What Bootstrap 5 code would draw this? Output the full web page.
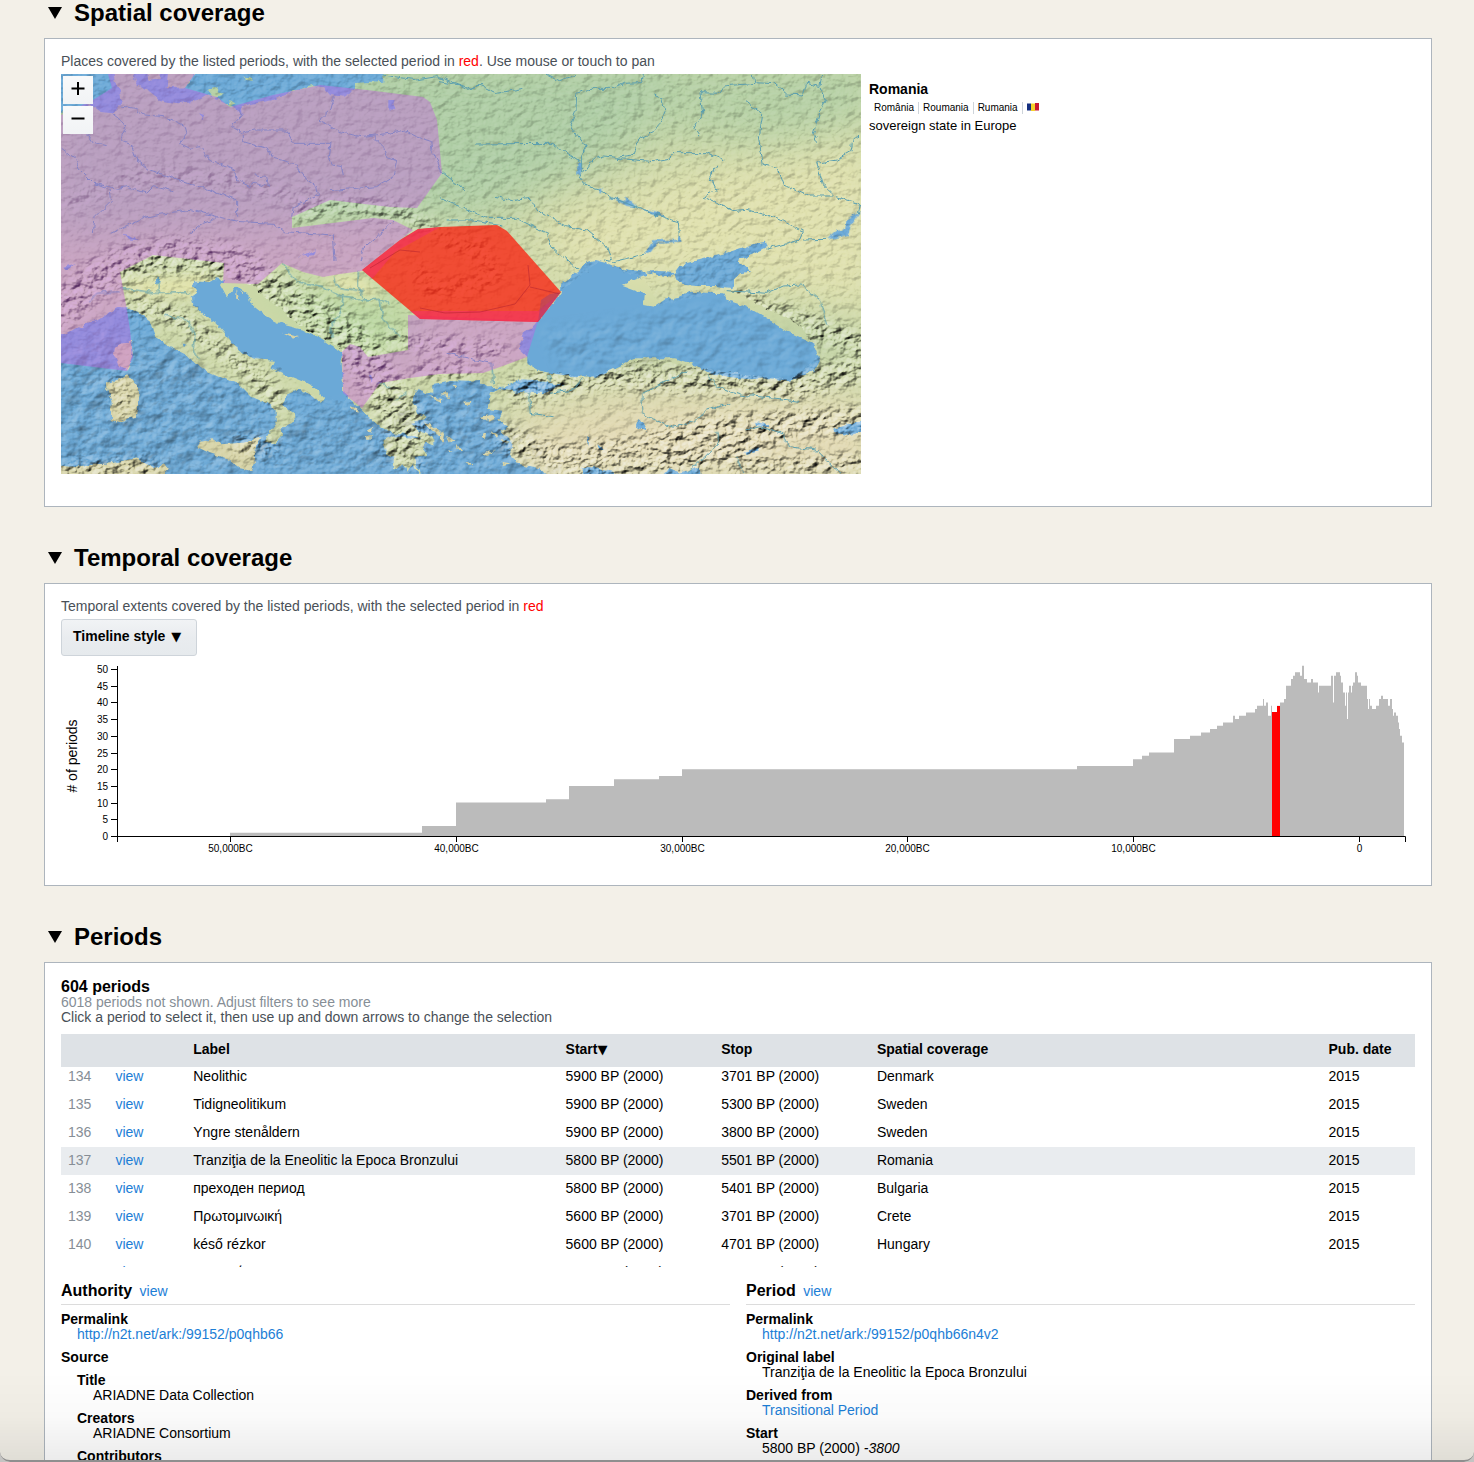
<!DOCTYPE html>
<html lang="en">
<head>
<meta charset="utf-8">
<meta name="viewport" content="width=device-width, initial-scale=1">
<title>Periods</title>
<link rel="stylesheet" href="https://cdn.jsdelivr.net/npm/bootstrap@5.3.0/dist/css/bootstrap.min.css">
<style>
  body { background: #f3f0e8; color: #000; font: 14px/15px "Liberation Sans", Arial, sans-serif; }
  a { color: #1c7ed6; text-decoration: none; }
  main { padding: 0 42px 0 44px; }
  .section-title { font-size: 24px; line-height: 26px; font-weight: 700; margin: 38px 0 12px; }
  section:first-child .section-title { margin-top: 0; }
  .section-toggle { all: unset; display: flex; align-items: center; gap: 12px; padding-left: 4px; cursor: pointer; }
  .panel { background: #fff; border: 1px solid #adb5bd; padding: 15px 16px 16px; }
  .hint { color: #495057; margin-bottom: 5px; }
  .selected-word { color: #f00; }
  .map-frame { width: 800px; max-width: 100%; }
  .map-frame svg { display: block; width: 100%; height: auto; }
  .map-zoom { position: absolute; top: 2px; left: 2px; gap: 2px; }
  .map-zoom button { width: 30px; height: 28px; border: 0; padding: 0; background: linear-gradient(#f8f9fa, #f1f3f5); }
  .map-zoom svg { width: 14px; margin: 0 auto; }
  .place-info { padding-top: 7px; }
  .place-name { font-size: 14px; font-weight: 700; line-height: 16px; }
  .alt-names { font-size: 10px; line-height: 12px; margin: 5px 0 4px; padding-left: 1px; }
  .alt-names li { padding: 0 4px; border-right: 1px solid #ced4da; }
  .alt-names li:last-child { border: 0; }
  .alt-names svg { display: block; }
  .place-note { font-size: 13px; }
  .style-button { height: 37px; padding: 0 15px 2px 11px; border: 1px solid #ced4da; border-radius: 3px; background: linear-gradient(#f1f3f5, #e9ecef 50%, #e6eaed); font-size: 14px; font-weight: 700; line-height: 15px; color: #000; }
  .glyph { font-family: "DejaVu Sans", sans-serif; font-size: 13px; line-height: 13px; }
  .style-button .glyph { margin-left: 2px; }
  .timeline { display: block; width: 100%; height: auto; }
  .timeline text { font-size: 10px; }
  .timeline .axis-title { font-size: 14px; }
  .period-count { font-size: 16px; line-height: 17px; font-weight: 700; }
  .not-shown { color: #868e96; }
  .period-scroll { height: 233px; overflow: hidden; margin-top: 9px; }
  .period-list { width: 100%; table-layout: fixed; border-collapse: collapse; }
  .period-list th { background: #dee2e6; height: 33px; padding: 0 7px 3px; white-space: nowrap; }
  .period-list td { padding: 6px 7px 7px; white-space: nowrap; }
  .period-list tbody tr:first-child td { padding-top: 2px; }
  .period-list tr.chosen { background: #e9ecef; }
  .period-list td:first-child { color: #868e96; }
  .detail-title { font-size: 16px; line-height: 20px; font-weight: 700; padding-bottom: 3px; border-bottom: 1px solid #dcdcdc; margin: 14px 0 7px; }
  .detail-title a { font-size: 14px; font-weight: 400; margin-left: 3px; }
  .facts { margin: 0; }
  .facts dt { font-weight: 700; line-height: 15px; }
  .facts dd { margin: 0 0 8px 16px; }
  .facts dd.nested { padding-top: 8px; }
  .window-edge { position: fixed; left: 0; right: 0; bottom: 0; height: 90px; pointer-events: none; border-bottom: 2px solid #8f8f8f; border-radius: 0 0 10px 10px; box-shadow: 0 0 0 12px #c4c4c2; clip-path: inset(0); background: linear-gradient(transparent, rgba(0,0,0,.02) 50%, rgba(0,0,0,.075)); }
</style>
<script src="https://cdn.jsdelivr.net/npm/bootstrap@5.3.0/dist/js/bootstrap.bundle.min.js"></script>
</head>
<body class="vh-100 overflow-hidden">
<main>
  <section>
    <h2 class="section-title"><button class="section-toggle" type="button"><svg width="14" height="12" viewBox="0 0 14 12" aria-hidden="true"><path d="M0 0H14L7 12Z"/></svg>Spatial coverage</button></h2>
    <div class="panel pb-0">
      <p class="hint">Places covered by the listed periods, with the selected period in <span class="selected-word">red</span>. Use mouse or touch to pan</p>
      <div class="d-flex gap-2 mb-4 pb-2">
        <div class="map-frame position-relative flex-shrink-0">
          <svg viewBox="61 74 800 400" role="img" aria-label="Map of Europe and the Black Sea">
            <defs>
              <filter id="soft" x="-30%" y="-30%" width="160%" height="160%"><feGaussianBlur stdDeviation="22"/></filter>
              <filter id="fade" x="-30%" y="-30%" width="160%" height="160%"><feGaussianBlur stdDeviation="6"/></filter>
              <filter id="rugged" x="-5%" y="-5%" width="110%" height="110%" color-interpolation-filters="sRGB"><feTurbulence type="fractalNoise" baseFrequency=".14" numOctaves="2" seed="4"/><feDisplacementMap in="SourceGraphic" scale="6" xChannelSelector="R" yChannelSelector="G"/></filter>
              <filter id="relief" x="0" y="0" width="100%" height="100%" color-interpolation-filters="sRGB"><feTurbulence type="fractalNoise" baseFrequency=".1 .13" numOctaves="4" seed="11"/><feColorMatrix values="0 0 0 0 0 0 0 0 0 0 0 0 0 0 0 1 0 0 0 0"/><feDiffuseLighting surfaceScale="3.500" diffuseConstant=".76" lighting-color="#fff"><feDistantLight azimuth="225" elevation="45"/></feDiffuseLighting></filter>
              <filter id="swell" x="0" y="0" width="100%" height="100%" color-interpolation-filters="sRGB"><feTurbulence type="fractalNoise" baseFrequency=".05 .06" numOctaves="3" seed="7"/><feColorMatrix values="0 0 0 0 0 0 0 0 0 0 0 0 0 0 0 1 0 0 0 0"/><feDiffuseLighting surfaceScale="2.500" diffuseConstant=".71" lighting-color="#fff"><feDistantLight azimuth="225" elevation="45"/></feDiffuseLighting></filter>
              <mask id="ranges" maskUnits="userSpaceOnUse" x="61" y="74" width="800" height="400">
                <rect x="61" y="74" width="800" height="400" fill="#333"/>
                <g filter="url(#fade)" fill="none" stroke="#fff" stroke-linecap="round" stroke-linejoin="round">
                  <path d="M61 310L95 280L130 262L180 255L225 262L250 270" stroke-width="34"/>
                  <path d="M65 205L110 185L160 175L230 180L280 195L310 195" stroke-width="12" opacity=".4"/>
                  <path d="M300 212L335 205L400 212L440 235L480 255" stroke-width="14" opacity=".8"/>
                  <path d="M475 240L495 275L470 287L430 290L420 270" stroke-width="16" opacity=".8"/>
                  <path d="M130 302L180 318L215 345L255 375L275 400" stroke-width="18"/>
                  <path d="M255 285L300 310L350 340L375 375L410 430" stroke-width="40"/>
                  <path d="M390 340L430 345L500 350M420 370L470 370" stroke-width="14"/>
                  <path d="M520 390L600 375L700 380L800 385L855 370M510 440L560 460L640 450L700 430L860 420M560 470L690 460L780 430" stroke-width="26"/>
                  <path d="M740 300L790 320L861 345" stroke-width="22"/>
                  <path d="M240 445L270 448M120 385L125 410M70 470L150 468M390 450L415 460M730 465H860" stroke-width="18"/>
                </g>
                <!-- the sea floor keeps its own, flatter shading -->
                <path d="M528 345L535 318L560 290L600 262L645 280L660 305L730 290L800 325L820 355L790 380L700 368L650 357L590 377L530 370ZM228 278L250 285L300 325L342 350L345 400L320 400L270 362L240 350L195 305L195 285Z" fill="#000" filter="url(#rugged)"/>
              </mask>
              <mask id="deep" maskUnits="userSpaceOnUse" x="61" y="74" width="800" height="400"><g filter="url(#fade)" fill="#bbb"><path d="M100 330L200 360L270 420L330 410L480 380L560 474H61V360Z"/><path d="M540 330L640 315L740 300L820 350L800 380L700 370L560 370Z" fill="#666"/></g></mask>
              <clipPath id="red-area"><path d="M362 270L400 240L418 229L440 227L497 225L507 231L561 292L538 322L420 319Z"/></clipPath>
            </defs>
            <rect x="61" y="74" width="800" height="400" fill="#cdd8a8"/>
            <g filter="url(#soft)">
              <path d="M40 50H680L640 150L480 220L300 230L40 240Z" fill="#aecda4"/>
              <path d="M680 50H880V140L760 150L640 130Z" fill="#b5d0a4"/>
              <path d="M540 220L700 170L880 130V310L720 290L560 280Z" fill="#e0e1ae"/>
              <path d="M500 420L620 390L760 390L880 400V490H520Z" fill="#e2d9b2"/>
              <path d="M250 270L330 290L420 300L410 350L340 350Z" fill="#b6d69f"/>
              <path d="M740 290L861 340V360L800 350Z" fill="#b5cda0"/>
              <path d="M590 340H760V365H590Z" fill="#bccf9e"/>
            </g>
            <g filter="url(#fade)" fill="#e2e3aa"><path d="M120 282L210 275L200 296L140 295Z"/><path d="M320 278L360 275L385 300L340 290Z"/></g>
            <!-- seas -->
            <g filter="url(#rugged)" fill="#6ba9d7">
              <g transform="translate(40 0) scale(.333333)">
                <path d="M20 180H215L225 250L240 270L245 310L215 340L180 335L150 315L130 320L20 350Z"/>
                <path d="M275 180H1030V245L975 250L945 252V270L910 290L870 285L850 262L820 257L760 272L700 300L605 318L608 345L580 320L540 300L500 285L475 300L420 310L380 305L360 300L330 275L290 255Z"/>
                <g fill="#b4cfa2"><path d="M320 200H362V238L325 242Z"/><path d="M385 200H475L440 262L380 265Z"/><path d="M505 270L530 262L545 285L520 292ZM612 230L635 232L638 243L615 240ZM565 300L590 310L570 318Z"/></g>
                <path d="M245 705L270 708L293 722L275 722ZM775 770L805 762L830 750L825 765ZM1045 300L1065 300L1060 315L1070 328L1045 325ZM478 340L492 345L488 358Z"/>
              </g>
              <g transform="translate(40 250) scale(.333333)">
                <path d="M40 262L100 240L150 215L190 200L230 172L260 172L290 182L330 215L345 260L390 290L440 315L480 355L550 385L600 405L635 440L680 460L710 480V520L690 545L675 575L705 580L725 555L730 530L765 515L762 490L740 475L725 465L745 430L775 418L815 435L845 462L852 440L825 415L790 395L740 375L695 355L705 332L650 328L615 315L580 285L555 250L530 220L490 195L460 165L455 140L470 130L455 110L460 95L500 95L530 85L550 90L540 105L560 142L580 115L600 112L625 130L630 160L680 200L730 225L790 240L850 270L905 310V340L910 430L955 470L985 500L1020 530L1060 550L1110 556L1150 570L1100 565L1060 558L1030 572L1040 610L1060 620L1062 650L1075 655L1090 640L1105 665L1120 640L1140 675L1142 668L1120 620L1165 615L1145 590L1160 578L1205 598L1190 570L1140 540L1110 520L1160 505L1135 490L1115 440L1135 415L1160 430L1190 432L1180 410L1200 400L1320 390V700H40Z"/>
                <path d="M345 90L360 80L358 100L348 102ZM985 375L998 380L995 395ZM430 280L440 285L435 292ZM70 50L110 40L80 60Z"/>
              </g>
              <g transform="translate(440 250) scale(.333333)">
                <path d="M362 128L365 95L390 85L415 65L435 38L465 30L500 40L530 55L615 65L620 75L580 90L548 105L615 130L612 165L640 170L670 150L720 140L750 125L800 128L850 130L860 150L920 170L980 205L1045 245L1120 280L1140 330L1120 365L1050 393L985 385L930 388L860 380L800 365L770 345L705 325L590 325L545 345L470 380L380 378L300 362L262 340V320L235 295L252 250L280 232L295 212Z"/>
                <path d="M700 72L720 45L800 25L870 5L930-15L975-25L980-8L935 15L890 30L930 65L900 70L880 90L878 115L830 108L770 108L735 105L705 90ZM615 65L650 62L700 66L695 80L650 74Z"/>
                <path d="M180 418L220 400L240 388L320 392L330 400L375 405L330 420L320 430L270 428L230 425Z"/>
                <path d="M-20 402L30 390L100 393L130 400L145 412L190 410L150 430L142 480L190 485L175 510L205 530L185 545L215 575L210 610L225 640L300 655L330 690H-20Z"/>
                <path d="M425 655L460 655L520 665L530 700H425ZM655 700L690 655L720 668L780 650L782 700Z"/>
                <path d="M600 505L622 545L590 530ZM1175 540L1230 520L1280 518V540L1230 555L1190 550ZM438 562L448 565L445 588ZM472 580L495 600L480 603ZM915 605L960 590L970 575L950 605L920 615ZM945 515L990 525L985 532L948 525Z"/>
              </g>
              <g transform="translate(440 40) scale(.333333)">
                <path d="M413 370L425 368L422 408L412 400ZM478 442L488 445L486 460L478 458ZM510 470L555 484L560 473L592 502L560 498ZM600 506L645 514L680 534L640 524ZM718 585L725 605L650 608L625 642L615 640L640 600L710 600ZM1160 598L1190 572L1210 570L1222 538L1260 515L1235 550L1225 585L1180 595Z"/>
              </g>
            </g>
            <rect x="61" y="74" width="800" height="400" filter="url(#swell)" mask="url(#deep)" style="mix-blend-mode:hard-light"/>
            <!-- islands -->
            <g filter="url(#rugged)" fill="#d6d3a6">
              <g transform="translate(40 250) scale(.333333)">
                <path d="M225 290L245 280L270 278L275 262L281 310L262 362L235 345L222 315Z"/>
                <path d="M195 400L215 400L265 373L298 415L288 500L270 505L240 520L212 510L215 455Z"/>
                <path d="M470 590L480 575L520 568L550 582L610 578L668 562L640 600L645 640L635 662L600 655L560 625L510 610Z"/>
                <path d="M40 645L100 650L150 645L210 640L290 625L320 645L340 655L370 640L380 655L360 700H40Z"/>
                <path d="M1145 515L1170 520L1200 545L1218 562L1190 552ZM975 560L995 555L995 572L980 572ZM930 465L945 470L955 485L940 478ZM985 590L1005 595ZM1000 530L985 540L995 545ZM590 120L598 155L588 145ZM600 120L612 130L605 132Z"/>
                <path d="M1165 440L1200 455L1205 448ZM1200 435L1228 445L1220 430ZM1238 405L1252 408L1245 415ZM720 235L750 240ZM725 248L780 262L760 266ZM318 272L340 275ZM1225 600L1240 605L1230 610ZM1250 580L1262 600L1255 605ZM1230 630L1245 640Z"/>
              </g>
              <g transform="translate(440 250) scale(.333333)">
                <path d="M72 455L95 452L82 465ZM125 500L150 495L168 508L145 515ZM128 545L138 548L135 570L126 560ZM155 540L175 555L165 565ZM0 540L15 550L12 580L0 570ZM20 560L40 575L30 578ZM75 635L100 640L90 645ZM130 610L165 600L140 615ZM180 570L210 575L190 580ZM180 635L215 640L190 645ZM38 405L52 408L45 415ZM100 422L115 424ZM45 590L70 605L60 608ZM0 430L25 440L15 430Z"/>
              </g>
            </g>
            <rect x="61" y="74" width="800" height="400" filter="url(#relief)" mask="url(#ranges)" style="mix-blend-mode:hard-light"/>
            <!-- rivers -->
            <g filter="url(#rugged)" fill="none" stroke="#5a9fb0" stroke-width="3">
              <g transform="translate(40 0) scale(.333333)">
                <path d="M245 318L285 325L315 345L370 350L435 380L440 400L418 430L450 445L480 440L505 475L580 510L590 540L630 560L650 548L685 560L680 530L650 525"/>
                <path d="M215 340L260 375L240 420L275 435L290 480L330 510L420 540L480 560L590 600L590 650"/>
                <path d="M600 330L605 345L575 380L610 400L640 390L740 390L760 430L870 430L865 470L880 495L905 500L910 530"/>
                <path d="M610 400L610 425L680 445L700 475L760 490L790 530L830 560L835 585L760 620L755 650"/>
                <path d="M880 290L870 330L835 362L900 395L960 410L1050 400L1090 390L1130 410L1175 425L1180 455L1205 515L1275 572"/>
                <path d="M1000 410L1030 440L1040 470L1070 480L1060 530L1010 560L870 572"/>
                <path d="M65 445L105 475L120 510L160 550L210 570L215 600L165 650L160 700M160 550L230 565L260 560L320 580L340 560L400 575"/>
                <path d="M215 700L320 650L450 628L530 650L600 665L700 670L730 695L880 705L885 780M450 700L490 670L530 655M960 780L970 745L1010 710L1060 665M140 400L160 430L200 440"/>
                <path d="M1030 225L1130 240L1190 230L1220 240L1290 265L1330 250"/>
              </g>
              <g transform="translate(440 40) scale(.333333)">
                <path d="M610 105L605 128L550 130L520 145L450 145L410 160L408 210L390 255L438 320L425 345L425 400L420 410L440 438L480 448L510 470L590 502L680 535L715 545L718 590M615 642L520 665L495 660"/>
                <path d="M640 165L665 175L675 215L660 250L640 275L600 295L580 345L530 352L490 348L460 358L430 400M530 355L640 365L690 355L695 338L800 338L850 360M105 312L335 310L365 330L420 367"/>
                <path d="M0 125L60 135L80 148L120 135L170 160L250 145M320 105L355 122L410 105"/>
                <path d="M940 105L945 130L850 138L840 160L780 158L788 220L762 265L778 290M945 125L1000 128L1040 162L1090 165L1100 130L1140 140L1158 180L1140 215L1120 280L1133 305M1140 138L1145 105"/>
                <path d="M918 185L965 220L955 290L970 375L1012 385L1030 435L1105 468L1180 468L1240 485L1262 490L1255 520M1260 288L1240 295L1232 335L1190 360L1130 370L1150 435L1180 465"/>
                <path d="M828 380L810 410L830 450L790 470L830 490L880 512L920 508L1030 540L1090 575L1080 600L980 628M1090 600L1160 598"/>
                <path d="M0 475L60 500L140 535L230 535L320 580L335 620L415 690M165 472L215 482L270 475L290 510L380 560L440 570L500 620L512 660M20 540L100 540L190 555"/>
              </g>
              <g transform="translate(40 250) scale(.333333)">
                <path d="M240 115L300 122L350 130L450 128M355 80L355 130M727 40L770 95L850 110L900 140L970 150L1020 148L1050 165M880 80L890 110L970 125M955 62L955 110L970 145M1020 150L1030 210L1080 260M910 140L900 190L870 230L880 260M370 195L440 210L465 250L460 290L475 330M145 160L170 130L240 125"/>
                <path d="M1010 400L1050 410M1070 450L1100 425"/>
              </g>
              <g transform="translate(440 250) scale(.333333)">
                <path d="M860 122L980 130L1030 108L1085 105L1140 150L1160 230M160 400L155 340L20 310M605 430L608 490L640 510L700 532L760 515L800 480L870 460M610 430L690 390L740 365M800 370L830 410L900 435L1010 445L1080 455M920 540L960 530L1030 555L1045 590L1130 600L1200 670M890 620L900 650L915 670M830 545L835 580L790 625L740 665M330 375L330 395M430 385L400 420L330 430M265 430L270 490L340 500"/>
              </g>
            </g>
            <!-- period coverage -->
            <g fill="#c65fe3" fill-opacity=".42">
              <path d="M108 74H195L185 88L217 97L230 107L273 95L320 85L367 90L423 97L430 102L437 120L442 173L417 208L390 207L330 200L292 217V228L373 218L393 220L413 230L400 240L362 271L340 274L323 277L303 272L282 263L258 284L223 283L224 263L153 255L120 272L127 310L130 330L133 357L127 371L61 363V115L93 100L112 88Z"/>
              <path d="M408 315L538 321L527 357L500 367L483 373L440 374L410 378L380 383L362 408L343 393L342 352L350 344L360 347L368 357L408 350Z"/>
            </g>
            <g clip-path="url(#red-area)">
              <rect x="360" y="220" width="205" height="105" fill="#fa2412" fill-opacity=".78"/>
              <path d="M362 270L400 240L418 229L440 227L395 252L372 279ZM405 311H538L562 292L538 322H420Z" fill="#f52a75" fill-opacity=".45"/>
              <path d="M541 300L550 294L561 292L538 322Z" fill="#8a4080" fill-opacity=".4"/>
              <path d="M420 308L445 313L480 312L515 304L530 285L528 265M530 287L560 294M370 268L400 250L420 252" fill="none" stroke="#b02030" stroke-opacity=".5"/>
            </g>
          </svg>
          <div class="map-zoom d-flex flex-column">
            <button type="button" aria-label="Zoom in"><svg viewBox="0 0 14 28"><path d="M7 6V19M.5 12.500H13.500" stroke="#000" stroke-width="2"/></svg></button>
            <button type="button" aria-label="Zoom out"><svg viewBox="0 0 14 28"><path d="M.5 12.500H13.500" stroke="#000" stroke-width="2"/></svg></button>
          </div>
        </div>
        <div class="place-info">
          <div class="place-name">Romania</div>
          <ul class="alt-names list-unstyled d-flex">
            <li>România</li><li>Roumania</li><li>Rumania</li>
            <li><svg width="12" height="9" viewBox="0 0 12 9" role="img" aria-label="Flag of Romania"><path d="M0 1.500H4V8.500H0Z" fill="#142f80"/><path d="M4 1.500H8V9H4Z" fill="#f5d22a"/><path d="M8 1H12V8.500H8Z" fill="#c8182f"/></svg></li>
          </ul>
          <div class="place-note">sovereign state in Europe</div>
        </div>
      </div>
    </div>
  </section>

  <section>
    <h2 class="section-title"><button class="section-toggle" type="button"><svg width="14" height="12" viewBox="0 0 14 12" aria-hidden="true"><path d="M0 0H14L7 12Z"/></svg>Temporal coverage</button></h2>
    <div class="panel">
      <p class="hint">Temporal extents covered by the listed periods, with the selected period in <span class="selected-word">red</span></p>
      <button type="button" class="style-button d-block">Timeline style <span class="glyph">▼</span></button>
      <svg class="timeline" viewBox="61 656 1354 213" role="img" aria-label="Number of periods over time">
        <path id="bars" fill="#bbb"/>
        <path d="M1272 836V712H1277V706H1280V836Z" fill="#f00"/>
        <path d="M111 836.500H1405.500V842M117.500 666V842" fill="none" stroke="#000"/>
        <g id="ticks" stroke="#000"></g>
        <g id="labels"></g>
        <text class="axis-title" transform="translate(77 756) rotate(-90)" text-anchor="middle"># of periods</text>
      </svg>
    </div>
  </section>

  <section>
    <h2 class="section-title"><button class="section-toggle" type="button"><svg width="14" height="12" viewBox="0 0 14 12" aria-hidden="true"><path d="M0 0H14L7 12Z"/></svg>Periods</button></h2>
    <div class="panel">
      <div class="period-count">604 periods</div>
      <div class="not-shown">6018 periods not shown. Adjust filters to see more</div>
      <div class="hint mb-0">Click a period to select it, then use up and down arrows to change the selection</div>
      <div class="period-scroll">
        <table class="period-list">
          <colgroup><col style="width:3.5%"><col style="width:5.75%"><col style="width:27.5%"><col style="width:11.5%"><col style="width:11.5%"><col style="width:33.35%"><col></colgroup>
          <thead><tr><th></th><th></th><th scope="col">Label</th><th scope="col">Start<span class="glyph">▼</span></th><th scope="col">Stop</th><th scope="col">Spatial coverage</th><th scope="col">Pub. date</th></tr></thead>
          <tbody>
            <tr><td>134</td><td><a href="#">view</a></td><td>Neolithic</td><td>5900 BP (2000)</td><td>3701 BP (2000)</td><td>Denmark</td><td>2015</td></tr>
            <tr><td>135</td><td><a href="#">view</a></td><td>Tidigneolitikum</td><td>5900 BP (2000)</td><td>5300 BP (2000)</td><td>Sweden</td><td>2015</td></tr>
            <tr><td>136</td><td><a href="#">view</a></td><td>Yngre stenåldern</td><td>5900 BP (2000)</td><td>3800 BP (2000)</td><td>Sweden</td><td>2015</td></tr>
            <tr class="chosen"><td>137</td><td><a href="#">view</a></td><td>Tranziţia de la Eneolitic la Epoca Bronzului</td><td>5800 BP (2000)</td><td>5501 BP (2000)</td><td>Romania</td><td>2015</td></tr>
            <tr><td>138</td><td><a href="#">view</a></td><td>преходен период</td><td>5800 BP (2000)</td><td>5401 BP (2000)</td><td>Bulgaria</td><td>2015</td></tr>
            <tr><td>139</td><td><a href="#">view</a></td><td>Πρωτομινωική</td><td>5600 BP (2000)</td><td>3701 BP (2000)</td><td>Crete</td><td>2015</td></tr>
            <tr><td>140</td><td><a href="#">view</a></td><td>késő rézkor</td><td>5600 BP (2000)</td><td>4701 BP (2000)</td><td>Hungary</td><td>2015</td></tr>
            <tr><td>141</td><td><a href="#">view</a></td><td>Μινωική</td><td>5600 BP (2000)</td><td>4401 BP (2000)</td><td>Crete</td><td>2015</td></tr>
          </tbody>
        </table>
      </div>
      <div class="row gx-3">
        <div class="col-6">
          <h3 class="detail-title">Authority <a href="#">view</a></h3>
          <dl class="facts">
            <dt>Permalink</dt><dd><a href="#">http://n2t.net/ark:/99152/p0qhb66</a></dd>
            <dt>Source</dt>
            <dd class="nested">
              <dl class="facts">
                <dt>Title</dt><dd>ARIADNE Data Collection</dd>
                <dt>Creators</dt><dd>ARIADNE Consortium</dd>
                <dt>Contributors</dt><dd></dd>
              </dl>
            </dd>
          </dl>
        </div>
        <div class="col-6">
          <h3 class="detail-title">Period <a href="#">view</a></h3>
          <dl class="facts">
            <dt>Permalink</dt><dd><a href="#">http://n2t.net/ark:/99152/p0qhb66n4v2</a></dd>
            <dt>Original label</dt><dd>Tranziţia de la Eneolitic la Epoca Bronzului</dd>
            <dt>Derived from</dt><dd><a href="#">Transitional Period</a></dd>
            <dt>Start</dt><dd>5800 BP (2000) <em>-3800</em></dd>
          </dl>
        </div>
      </div>
    </div>
  </section>
</main>
<div class="window-edge"></div>
<script>
  // each pair: left edge of a run, number of periods in it
  const runs = [[230,1],[422,3],[456,10],[546,11],[569,15],[614,17],[659,18],[682,20],[1077,21],[1133,23],[1142,24],[1149,25],[1174,29],[1190,30],[1201,31],[1210,32],[1217,33],[1223,34],[1233,36],[1235,35],[1239,36],[1246,37],[1255,38],[1257,39],[1263,41],[1264,39],[1266,40],[1268,36],[1271,39],[1272,37],[1277,39],[1280,40],[1284,41],[1286,45],[1291,47],[1293,48],[1295,49],[1300,48],[1302,51],[1304,47],[1307,46],[1311,47],[1313,46],[1318,43],[1319,45],[1331,48],[1333,40],[1334,48],[1336,49],[1340,48],[1341,46],[1343,43],[1345,39],[1346,43],[1347,35],[1348,43],[1349,45],[1351,43],[1352,45],[1353,46],[1355,49],[1357,48],[1358,46],[1361,45],[1367,41],[1368,38],[1369,41],[1370,39],[1372,38],[1376,39],[1379,41],[1381,42],[1383,41],[1388,39],[1390,41],[1392,38],[1393,36],[1394,37],[1396,36],[1398,34],[1399,32],[1400,30],[1402,28]];
  const y = n => (836 - n * 3.34).toFixed(1);
  let d = 'M230 836';
  for (const [x, n] of runs) d += `H${x}V${y(n)}`;
  document.getElementById('bars').setAttribute('d', d + 'H1404V836Z');
  let t = '', l = '';
  for (let n = 0; n <= 50; n += 5) {
    const p = Math.round(y(n)) + .5;
    t += `<path d="M111 ${p}H117"/>`;
    l += `<text x="108" y="${p + 3}" text-anchor="end">${n}</text>`;
  }
  ['50,000BC', '40,000BC', '30,000BC', '20,000BC', '10,000BC', '0'].forEach((s, i) => {
    const p = Math.round(230 + i * 225.8) + .5;
    t += `<path d="M${p} 837V842"/>`;
    l += `<text x="${p}" y="852" text-anchor="middle">${s}</text>`;
  });
  document.getElementById('ticks').innerHTML = t;
  document.getElementById('labels').innerHTML = l;
</script>
</body>
</html>
